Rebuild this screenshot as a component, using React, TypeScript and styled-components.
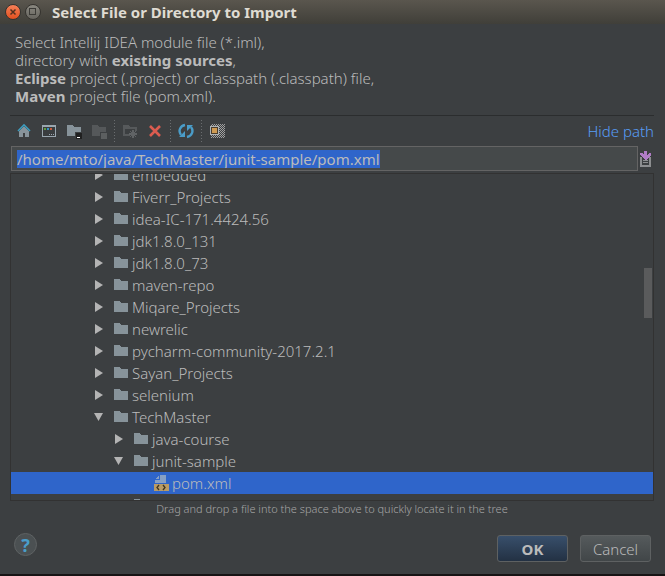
import React from "react";
import styled, { createGlobalStyle, css } from "styled-components";

const Global = createGlobalStyle`
  * { box-sizing: border-box; }
  html, body, #root { height: 100%; }
  body { margin: 0; background: #171314; }
  body, button, input { font-family: "Noto Sans", "Open Sans", sans-serif; font-weight: 300; }
  b { font-weight: 700; }
`;

const Dialog = styled.main`
  display: flex;
  flex-direction: column;
  height: 100vh;
  border-bottom: 2px solid #171314;
  background: #3c3f41;
  color: #bbbbbb;
  font-size: 15px;
  overflow: hidden;
`;

const TitleBar = styled.header`
  display: flex;
  align-items: center;
  flex: none;
  gap: 4px;
  height: 24px;
  padding-left: 5px;
  background: linear-gradient(#5a564e, #403f39);
`;

const WindowButton = styled.button<{ $close?: boolean }>`
  display: grid;
  place-items: center;
  width: 16px;
  height: 16px;
  padding: 0;
  border: 1px solid #35332f;
  border-radius: 50%;
  background: ${(p) => (p.$close ? "linear-gradient(#f58058, #e2501f)" : "linear-gradient(#8a8880, #66645e)")};
`;

const Title = styled.h1`
  margin: 0 0 0 7px;
  color: #dfdbd2;
  font-size: 15px;
  font-weight: 700;
  line-height: 24px;
  white-space: nowrap;
`;

const Body = styled.div`
  display: flex;
  flex: 1;
  flex-direction: column;
  min-height: 0;
  padding: 9px 11px 0 10px;
`;

const Intro = styled.p`
  margin: 0;
  padding: 0 0 10px 5px;
  line-height: 18px;
  white-space: nowrap;
`;

const Toolbar = styled.div`
  display: flex;
  align-items: center;
  flex: none;
  height: 31px;
  padding-left: 1px;
  border-top: 1px solid #2b2d2e;
`;

const Tool = styled.button`
  display: grid;
  place-items: center;
  width: 25px;
  height: 24px;
  padding: 0;
  border: 0;
  background: none;
`;

const Divider = styled.span`
  width: 1px;
  height: 22px;
  margin: 0 2px 0 3px;
  background: repeating-linear-gradient(#6a6d6f 0 1px, transparent 1px 3px);
`;

const HideLink = styled.a`
  margin-left: auto;
  color: #589df6;
  text-decoration: none;
`;

const PathRow = styled.div`
  display: flex;
  align-items: center;
  flex: none;
  margin-left: 1px;
`;

const PathBox = styled.div`
  display: flex;
  align-items: center;
  flex: 1;
  height: 25px;
  padding-left: 5px;
  border: 1px solid #646464;
  background: #45494a;
`;

const PathInput = styled.input`
  field-sizing: content;
  height: 18px;
  padding: 0;
  border: 0;
  outline: 0;
  background: #2f65ca;
  color: #bbbbbb;
  font-size: 15px;
  font-weight: 400;
`;

const HistoryButton = styled(Tool)`
  width: 16px;
`;

const Tree = styled.div`
  position: relative;
  flex: 1;
  min-height: 0;
  margin-top: 2px;
  border: 1px solid #323232;
  overflow: hidden;
`;

const Rows = styled.ul`
  margin: -10px 0 0;
  padding: 0;
  list-style: none;
`;

const Row = styled.li<{ $depth: number; $selected?: boolean }>`
  display: flex;
  align-items: center;
  height: 22px;
  padding-left: ${(p) => 82 + p.$depth * 20}px;
  line-height: 22px;
  white-space: nowrap;
  ${(p) => p.$selected && css`background: #2f65ca;`}
`;

const Toggle = styled.span`
  display: grid;
  place-items: center;
  width: 12px;
  height: 12px;
  margin-right: 8px;
`;

const FileIcon = styled.span`
  display: grid;
  width: 16px;
  height: 16px;
  margin-right: 3px;
`;

const ScrollThumb = styled.div`
  position: absolute;
  top: 94px;
  right: 1px;
  width: 8px;
  height: 50px;
  background: #5a5b5c;
`;

const Hint = styled.p`
  margin: 0;
  color: #a6a6a6;
  font-size: 11px;
  line-height: 16px;
  text-align: center;
`;

const Footer = styled.footer`
  display: flex;
  align-items: flex-start;
  flex: none;
  gap: 12px;
  height: 57px;
  padding: 18px 3px 0 4px;
`;

const HelpButton = styled.button`
  width: 23px;
  height: 23px;
  margin: -2px auto 0 0;
  padding: 0;
  border: 1px solid #5e6263;
  border-radius: 50%;
  background: #4b5052;
  color: #4a9dc9;
  font-size: 18px;
  font-weight: 700;
  line-height: 20px;
`;

const ActionButton = styled.button<{ $primary?: boolean }>`
  width: 71px;
  height: 27px;
  padding: 0;
  border: 1px solid #5e6162;
  border-radius: 3px;
  background: ${(p) => (p.$primary ? "linear-gradient(#384f6b, #233143)" : "linear-gradient(#555a5c, #414648)")};
  color: #bbbbbb;
  font-size: 15px;
  font-weight: ${(p) => (p.$primary ? 700 : 300)};
`;

const Svg = ({ children, size = 16 }: { children: React.ReactNode; size?: number }) => (
  <svg width={size} height={size} viewBox={`0 0 ${size} ${size}`} shapeRendering="crispEdges" aria-hidden="true">
    {children}
  </svg>
);

const Folder = () => (
  <Svg><path d="M1 2h5l2 2h7v9H1z" fill="#87939a" /></Svg>
);

const XmlFile = () => (
  <Svg>
    <path d="M7 0h6v8H2V5h5zM6 0v4H2z" fill="#87a0c4" />
    <path d="M1 9h15v7H1z" fill="#b99b66" />
    <path d="M6 10l-2 2.500 2 2.500M10 10l2 2.500-2 2.500" fill="none" stroke="#40351f" strokeWidth="1.300" shapeRendering="auto" />
  </Svg>
);

const Arrow = ({ open }: { open: boolean }) => (
  <svg width="12" height="12" aria-hidden="true">
    <path d={open ? "M1 2h9L5.500 10z" : "M2 1l8 5-8 5z"} fill="#b4b4b4" />
  </svg>
);

type Entry = { name: string; depth: number; state?: "open" | "file" };

const entries: Entry[] = [
  { name: "embedded", depth: 0 },
  { name: "Fiverr_Projects", depth: 0 },
  { name: "idea-IC-171.4424.56", depth: 0 },
  { name: "jdk1.8.0_131", depth: 0 },
  { name: "jdk1.8.0_73", depth: 0 },
  { name: "maven-repo", depth: 0 },
  { name: "Miqare_Projects", depth: 0 },
  { name: "newrelic", depth: 0 },
  { name: "pycharm-community-2017.2.1", depth: 0 },
  { name: "Sayan_Projects", depth: 0 },
  { name: "selenium", depth: 0 },
  { name: "TechMaster", depth: 0, state: "open" },
  { name: "java-course", depth: 1 },
  { name: "junit-sample", depth: 1, state: "open" },
  { name: "pom.xml", depth: 2, state: "file" },
  { name: "shops-mall", depth: 1 },
];

export default function App() {
  return (
    <>
      <Global />
      <Dialog>
        <TitleBar>
          <WindowButton $close aria-label="Close">
            <svg width="8" height="8"><path d="M1.500 1.500l5 5M6.500 1.500l-5 5" stroke="#54301f" strokeWidth="1.500" /></svg>
          </WindowButton>
          <WindowButton aria-label="Maximize">
            <Svg size={8}><path d="M0.500 0.500h6v6h-6z" fill="none" stroke="#3c3b37" /></Svg>
          </WindowButton>
          <Title>Select File or Directory to Import</Title>
        </TitleBar>
        <Body>
          <Intro>
            Select Intellij IDEA module file (*.iml),<br />
            directory with <b>existing sources</b>,<br />
            <b>Eclipse</b> project (.project) or classpath (.classpath) file,<br />
            <b>Maven</b> project file (pom.xml).
          </Intro>
          <Toolbar role="toolbar">
            <Tool aria-label="Home">
              <Svg>
                <path d="M3 8l5-4 5 4v6H9v-4H7v4H3z" fill="#87939a" />
                <path d="M2 8l6-6 6 6" fill="none" stroke="#3d9dbf" strokeWidth="1.600" shapeRendering="auto" />
              </Svg>
            </Tool>
            <Tool aria-label="Project directory">
              <Svg>
                <path d="M1 2h14v12H1z" fill="#9aa7b0" /><path d="M2 4h12v9H2z" fill="#3a3d3f" />
                <path d="M3 5h2v2H3z" fill="#5f9e3f" /><path d="M6 5h2v2H6z" fill="#3592c4" /><path d="M9 5h2v2H9z" fill="#c75b3a" />
                <path d="M8 11h1v1H8zM10 11h1v1h-1zM12 11h1v1h-1z" fill="#9aa7b0" />
              </Svg>
            </Tool>
            <Tool aria-label="Module directory">
              <Svg><path d="M1 2h5l2 2h7v5H9v4H1z" fill="#87939a" /><path d="M10 10h6v6h-6z" fill="#202020" /><path d="M11 14h3v1h-3z" fill="#fff" /></Svg>
            </Tool>
            <Tool aria-label="Module" disabled>
              <Svg><path d="M1 2h5l2 2h7v5H9v4H1z" fill="#55585a" /><path d="M10 10h6v6h-6z" fill="#5c5f60" /></Svg>
            </Tool>
            <Divider />
            <Tool aria-label="New folder" disabled>
              <Svg>
                <path d="M1 2h5l2 2h7v4h-2V6H3v5h5v2H1z" fill="#56595b" />
                <path d="M11 7v8M7 11h8M8 8l6 6M14 8l-6 6" stroke="#606365" strokeWidth="1.400" />
              </Svg>
            </Tool>
            <Tool aria-label="Delete">
              <Svg><path d="M3 3l10 10M13 3L3 13" stroke="#db5c50" strokeWidth="2.600" shapeRendering="auto" /></Svg>
            </Tool>
            <Divider />
            <Tool aria-label="Refresh">
              <Svg>
                <g shapeRendering="auto">
                  <path d="M7 2C2 3 0 8 3 12M9 14c5-1 7-6 4-10" fill="none" stroke="#4a9cc8" strokeWidth="2.400" />
                  <path d="M1 14h6V8zM15 2H9v6z" fill="#4a9cc8" />
                </g>
              </Svg>
            </Tool>
            <Divider />
            <Tool aria-label="Show hidden files">
              <Svg>
                <defs>
                  <pattern id="dots" width="2" height="2" patternUnits="userSpaceOnUse"><path d="M0 0h1v1H0zM1 1h1v1H1z" fill="#a0a0a0" /></pattern>
                </defs>
                <path d="M2 1h14v14H2z" fill="url(#dots)" /><path d="M1 3h9v9H1z" fill="#aeb4b8" /><path d="M2 4h7v7H2z" fill="#4a3d2c" /><path d="M3 5h5v5H3z" fill="#cf9b52" />
              </Svg>
            </Tool>
            <HideLink href="#path">Hide path</HideLink>
          </Toolbar>
          <PathRow>
            <PathBox>
              <PathInput aria-label="Path" defaultValue="/home/mto/java/TechMaster/junit-sample/pom.xml" />
            </PathBox>
            <HistoryButton aria-label="Recent paths">
              <Svg>
                <path d="M2 6h2v8h7V6h2v10H2zM5 9h5v1H5zM5 11h5v1H5z" fill="#8c8e90" />
                <path d="M6 0h3v4l2-2h2v2L8 9 2 4V2h2l2 2z" fill="#b07cc6" />
              </Svg>
            </HistoryButton>
          </PathRow>
          <Tree>
            <Rows>
              {entries.map(({ name, depth, state }) => (
                <Row key={name} $depth={depth} $selected={state === "file"}>
                  <Toggle>{state !== "file" && <Arrow open={state === "open"} />}</Toggle>
                  <FileIcon>{state === "file" ? <XmlFile /> : <Folder />}</FileIcon>
                  {name}
                </Row>
              ))}
            </Rows>
            <ScrollThumb />
          </Tree>
          <Hint>Drag and drop a file into the space above to quickly locate it in the tree</Hint>
          <Footer>
            <HelpButton aria-label="Help">?</HelpButton>
            <ActionButton $primary>OK</ActionButton>
            <ActionButton>Cancel</ActionButton>
          </Footer>
        </Body>
      </Dialog>
    </>
  );
}
